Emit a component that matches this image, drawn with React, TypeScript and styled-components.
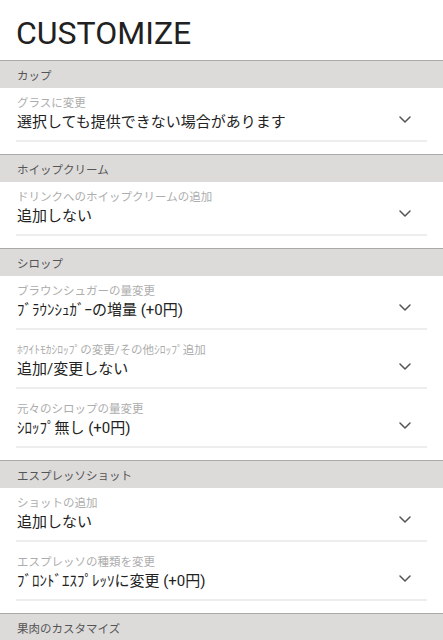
import React from 'react';
import styled, { createGlobalStyle } from 'styled-components';

interface Option {
  label: string;
  value: string;
}

interface SectionData {
  title: string;
  options: Option[];
}

const sections: SectionData[] = [
  {
    title: 'カップ',
    options: [{ label: 'グラスに変更', value: '選択しても提供できない場合があります' }],
  },
  {
    title: 'ホイップクリーム',
    options: [{ label: 'ドリンクへのホイップクリームの追加', value: '追加しない' }],
  },
  {
    title: 'シロップ',
    options: [
      { label: 'ブラウンシュガーの量変更', value: 'ﾌﾞﾗｳﾝｼｭｶﾞｰの増量 (+0円)' },
      { label: 'ﾎﾜｲﾄﾓｶｼﾛｯﾌﾟの変更/その他ｼﾛｯﾌﾟ追加', value: '追加/変更しない' },
      { label: '元々のシロップの量変更', value: 'ｼﾛｯﾌﾟ無し (+0円)' },
    ],
  },
  {
    title: 'エスプレッソショット',
    options: [
      { label: 'ショットの追加', value: '追加しない' },
      { label: 'エスプレッソの種類を変更', value: 'ﾌﾞﾛﾝﾄﾞｴｽﾌﾟﾚｯｿに変更 (+0円)' },
    ],
  },
  {
    title: '果肉のカスタマイズ',
    options: [],
  },
];

const Chevron = () => (
  <ChevronIcon width="12" height="7" viewBox="0 0 12 7">
    <polyline
      points="1,1 6,6 11,1"
      fill="none"
      stroke="#555"
      strokeWidth="1.5"
      strokeLinecap="round"
      strokeLinejoin="round"
    />
  </ChevronIcon>
);

const App: React.FC = () => {
  return (
    <>
      <GlobalStyle />
      <Page>
        <Title>CUSTOMIZE</Title>
        {sections.map((section) => (
          <section key={section.title}>
            <SectionHeader>{section.title}</SectionHeader>
            {section.options.length > 0 && (
              <OptionList>
                {section.options.map((option) => (
                  <OptionRow key={option.label}>
                    <OptionText>
                      <OptionLabel>{option.label}</OptionLabel>
                      <OptionValue>{option.value}</OptionValue>
                    </OptionText>
                    <Chevron />
                  </OptionRow>
                ))}
              </OptionList>
            )}
          </section>
        ))}
      </Page>
    </>
  );
};

const GlobalStyle = createGlobalStyle`
  body {
    margin: 0;
    background: #fff;
    font-family: Roboto, "Noto Sans CJK JP", sans-serif;
  }
`;

const Page = styled.div`
  width: 443px;
  background: #fff;
`;

const Title = styled.h1`
  margin: 0;
  padding: 14px 16px 8px;
  font-size: 32px;
  line-height: 38px;
  font-weight: 400;
  color: #212121;
`;

const SectionHeader = styled.h2`
  margin: 0;
  height: 27px;
  padding: 0 17px;
  display: flex;
  align-items: center;
  border-top: 1px solid #a9a9a9;
  background: #dcdbda;
  font-size: 11.5px;
  font-weight: 400;
  color: #555;
`;

const OptionList = styled.div`
  display: flex;
  flex-direction: column;
  gap: 5px;
  padding: 0 16px 12px;
`;

const OptionRow = styled.div`
  display: flex;
  align-items: flex-end;
  padding: 7px 0 7px 1px;
  border-bottom: 2px solid #ededed;
`;

const OptionText = styled.div`
  flex: 1;
  min-width: 0;
`;

const OptionLabel = styled.div`
  font-size: 11.5px;
  line-height: 16px;
  color: #adadad;
`;

const OptionValue = styled.div`
  font-size: 15px;
  line-height: 22px;
  color: #222;
`;

const ChevronIcon = styled.svg`
  flex: none;
  margin: 0 16px 10px 0;
`;

export default App;
